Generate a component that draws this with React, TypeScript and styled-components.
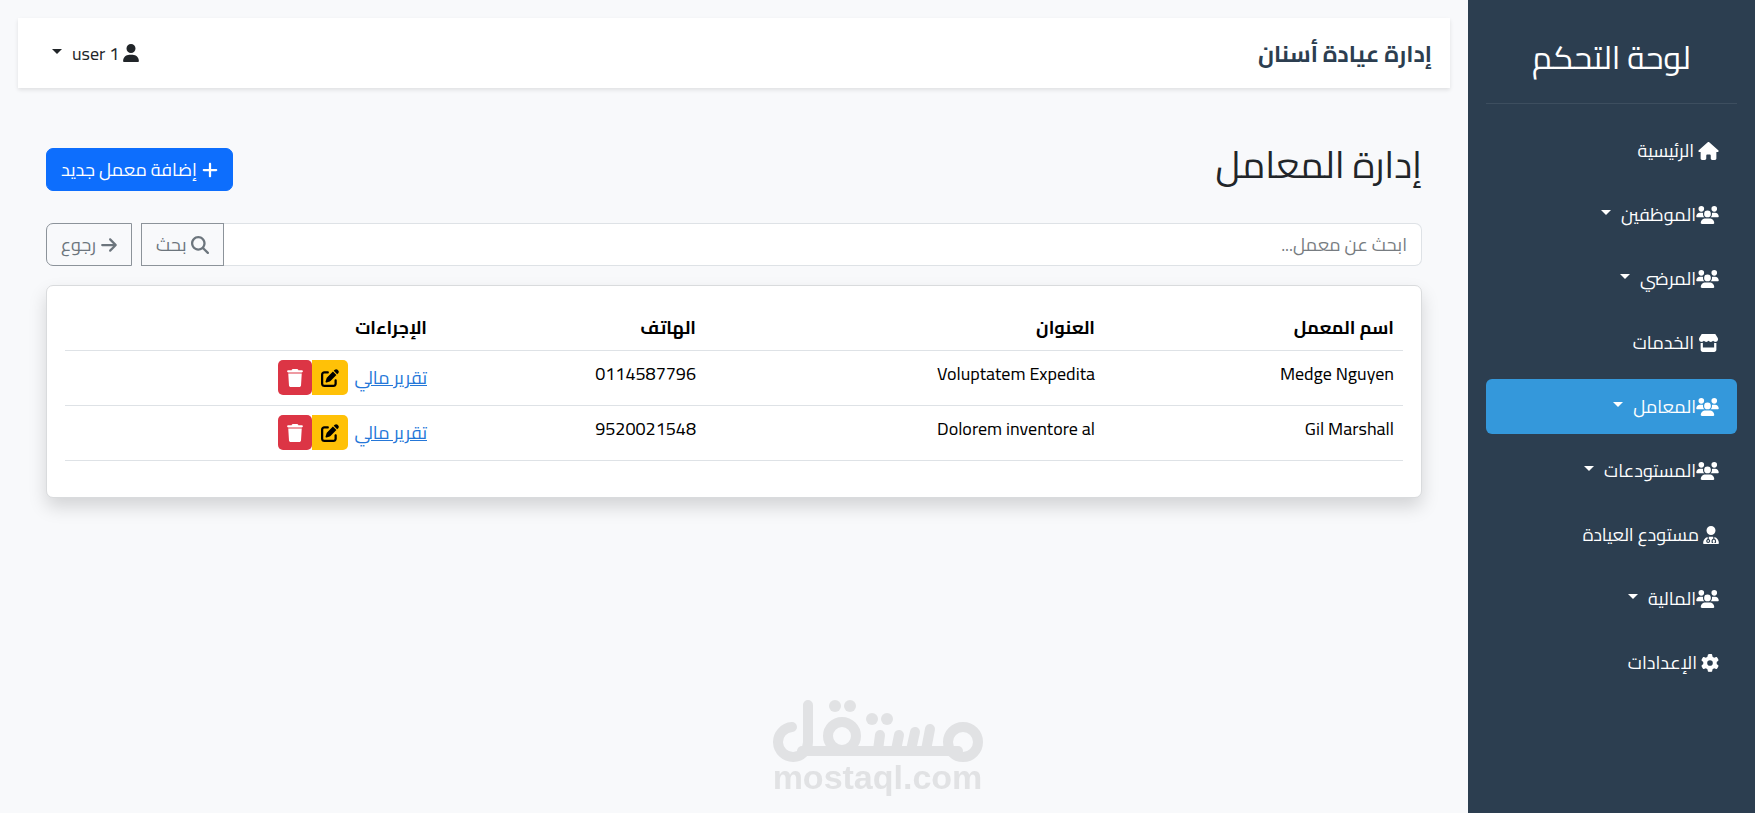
import React from "react";
import styled, { createGlobalStyle, css } from "styled-components";
import {
  FaHouse,
  FaUsers,
  FaStore,
  FaUserDoctor,
  FaGear,
  FaPlus,
  FaMagnifyingGlass,
  FaArrowRight,
  FaUser,
  FaPenToSquare,
  FaTrash,
} from "react-icons/fa6";

const GlobalStyle = createGlobalStyle`
  *, *::before, *::after { box-sizing: border-box; }
  body {
    margin: 0;
    background: #f8f9fb;
    color: #212529;
    font-family: Cairo, Roboto, "DejaVu Sans", sans-serif;
    font-size: 18px;
    line-height: 27px;
  }
  button, input { font: inherit; }
`;

const Glyph = styled.span<{ $width: number }>`
  display: flex;
  flex: none;
  svg {
    width: ${(p) => p.$width}px;
    height: 18px;
  }
`;

const Page = styled.div`
  display: flex;
  min-height: 100vh;
`;

const Sidebar = styled.aside`
  flex: 0 0 287px;
  padding: 18px;
  background: #2c3e50;
  color: #fff;
`;

const Brand = styled.h2`
  margin: 0 0 19px;
  padding: 18px 0 24px;
  border-bottom: 1px solid #3d4e5f;
  font-size: 32px;
  font-weight: 400;
  line-height: 43px;
  text-align: center;
`;

const NavList = styled.ul`
  display: flex;
  flex-direction: column;
  gap: 9px;
  margin: 0;
  padding: 0;
  list-style: none;
`;

const NavLink = styled.a<{ $active?: boolean; $tight?: boolean }>`
  display: flex;
  align-items: center;
  gap: ${(p) => (p.$tight ? 0 : 4)}px;
  padding: 14px 18px;
  border-radius: 6px;
  background: ${(p) => (p.$active ? "#3498db" : "transparent")};
  color: #fff;
  text-decoration: none;
  white-space: nowrap;
`;

const Caret = styled.span`
  width: 0;
  margin-inline-start: 10px;
  margin-bottom: 4px;
  border: 5px solid transparent;
  border-top-color: currentColor;
  border-bottom: 0;
`;

const Main = styled.main`
  flex: 1;
  min-width: 0;
  padding: 18px;
`;

const TopBar = styled.header`
  display: flex;
  align-items: center;
  justify-content: space-between;
  height: 70px;
  padding: 0 18px 0 34px;
  background: #fff;
  box-shadow: 0 2px 4px rgba(0, 0, 0, 0.1);
`;

const SiteName = styled.h1`
  margin: 0;
  color: #2c3e50;
  font-size: 23px;
  font-weight: 700;
`;

const UserMenu = styled.button`
  display: flex;
  align-items: center;
  padding: 0;
  border: 0;
  background: none;
  color: #212529;
`;

const UserName = styled.span`
  margin-inline-start: 4px;
`;

const Content = styled.section`
  padding: 55px 28px 0;
`;

const TitleRow = styled.div`
  display: flex;
  align-items: center;
  justify-content: space-between;
  margin-bottom: 27px;
`;

const PageTitle = styled.h2`
  margin: 0 0 9px;
  font-size: 37px;
  font-weight: 400;
  line-height: 44px;
`;

const buttonBase = css`
  display: flex;
  align-items: center;
  gap: 5px;
  height: 43px;
  padding: 0 14px;
  cursor: pointer;
  white-space: nowrap;
`;

const AddButton = styled.button`
  ${buttonBase}
  border: 1px solid #0d6efd;
  border-radius: 7px;
  background: #0d6efd;
  color: #fff;
`;

const OutlineButton = styled.button<{ $end?: boolean }>`
  ${buttonBase}
  border: 1px solid #8c939a;
  border-radius: ${(p) => (p.$end ? "7px 0 0 7px" : "0")};
  margin-inline-start: ${(p) => (p.$end ? 9 : 0)}px;
  background: transparent;
  color: #6c757d;
`;

const SearchForm = styled.form`
  display: flex;
  margin-bottom: 19px;
`;

const SearchInput = styled.input`
  flex: 1;
  min-width: 0;
  height: 43px;
  padding: 0 14px;
  border: 1px solid #dee2e6;
  border-left: 0;
  border-radius: 0 7px 7px 0;
  background: #fff;
  color: #212529;
  &::placeholder { color: #777c81; opacity: 1; }
`;

const Card = styled.div`
  padding: 18px 18px 36px;
  border: 1px solid #d9dbdd;
  border-radius: 7px;
  background: #fff;
  box-shadow: 0 9px 18px rgba(0, 0, 0, 0.15);
`;

const Table = styled.table`
  width: 100%;
  border-collapse: collapse;
  table-layout: fixed;
  color: #000;
`;

const Col = styled.col<{ $width: number }>`
  width: ${(p) => p.$width}px;
`;

const HeadCell = styled.th`
  padding: 10px 9px 9px;
  border-bottom: 1px solid #dee2e6;
  font-weight: 700;
  text-align: start;
`;

const Cell = styled.td`
  height: 55px;
  padding: 9px;
  border-bottom: 1px solid #dee2e6;
  text-align: start;
  vertical-align: top;
`;

const Actions = styled.div`
  display: flex;
  align-items: center;
`;

const ReportLink = styled.a`
  margin-inline-end: 6px;
  color: #2577d8;
`;

const IconButton = styled.button<{ $danger?: boolean }>`
  display: grid;
  place-items: center;
  width: ${(p) => (p.$danger ? 34 : 36)}px;
  height: 35px;
  padding: 0;
  border: 0;
  border-radius: ${(p) => (p.$danger ? "5px" : "0 5px 5px 0")};
  background: ${(p) => (p.$danger ? "#dc3545" : "#ffc107")};
  color: ${(p) => (p.$danger ? "#fff" : "#000")};
  cursor: pointer;
`;

const Watermark = styled.div`
  position: fixed;
  bottom: 21px;
  left: 50%;
  width: 212px;
  transform: translateX(-50%);
  color: #e1e2e4;
  pointer-events: none;
  direction: ltr;
  font-family: "Liberation Sans", sans-serif;
  font-size: 34px;
  font-weight: 700;
  line-height: 30px;
  text-align: center;
`;

const WatermarkLogo = styled.svg`
  display: block;
  width: 212px;
  height: 62px;
`;

const navItems = [
  { label: "الرئيسية", icon: FaHouse, width: 21 },
  { label: "الموظفين", icon: FaUsers, width: 23, menu: true },
  { label: "المرضي", icon: FaUsers, width: 23, menu: true },
  { label: "الخدمات", icon: FaStore, width: 21 },
  { label: "المعامل", icon: FaUsers, width: 23, menu: true, active: true },
  { label: "المستودعات", icon: FaUsers, width: 23, menu: true },
  { label: "مستودع العيادة", icon: FaUserDoctor, width: 16 },
  { label: "المالية", icon: FaUsers, width: 23, menu: true },
  { label: "الإعدادات", icon: FaGear, width: 18 },
];

const columns = [
  { title: "اسم المعمل", width: 299 },
  { title: "العنوان", width: 399 },
  { title: "الهاتف", width: 269 },
  { title: "الإجراءات", width: 371 },
];

const labs = [
  { name: "Medge Nguyen", address: "Voluptatem Expedita", phone: "0114587796" },
  { name: "Gil Marshall", address: "Dolorem inventore al", phone: "9520021548" },
];

export default function App() {
  return (
    <Page dir="rtl" lang="ar">
      <GlobalStyle />
      <Sidebar>
        <Brand>لوحة التحكم</Brand>
        <nav>
          <NavList>
            {navItems.map(({ label, icon: Icon, width, menu, active }) => (
              <li key={label}>
                <NavLink href="#" $active={active} $tight={menu}>
                  <Glyph $width={width}><Icon /></Glyph>
                  <span>{label}</span>
                  {menu && <Caret />}
                </NavLink>
              </li>
            ))}
          </NavList>
        </nav>
      </Sidebar>

      <Main>
        <TopBar>
          <SiteName>إدارة عيادة أسنان</SiteName>
          <UserMenu type="button">
            <Glyph $width={16}><FaUser /></Glyph>
            <UserName>user 1</UserName>
            <Caret />
          </UserMenu>
        </TopBar>

        <Content>
          <TitleRow>
            <PageTitle>إدارة المعامل</PageTitle>
            <AddButton type="button">
              <Glyph $width={16}><FaPlus /></Glyph>
              إضافة معمل جديد
            </AddButton>
          </TitleRow>

          <SearchForm>
            <SearchInput type="text" aria-label="ابحث عن معمل" placeholder="ابحث عن معمل..." />
            <OutlineButton type="button">
              <Glyph $width={18}><FaMagnifyingGlass /></Glyph>
              بحث
            </OutlineButton>
            <OutlineButton type="button" $end>
              <Glyph $width={16}><FaArrowRight /></Glyph>
              رجوع
            </OutlineButton>
          </SearchForm>

          <Card>
            <Table>
              <colgroup>
                {columns.map((column) => (
                  <Col key={column.title} $width={column.width} />
                ))}
              </colgroup>
              <thead>
                <tr>
                  {columns.map((column) => (
                    <HeadCell key={column.title} scope="col">{column.title}</HeadCell>
                  ))}
                </tr>
              </thead>
              <tbody>
                {labs.map((lab) => (
                  <tr key={lab.name}>
                    <Cell>{lab.name}</Cell>
                    <Cell>{lab.address}</Cell>
                    <Cell>{lab.phone}</Cell>
                    <Cell>
                      <Actions>
                        <ReportLink href="#">تقرير مالي</ReportLink>
                        <IconButton type="button" aria-label="تعديل">
                          <Glyph $width={18}><FaPenToSquare /></Glyph>
                        </IconButton>
                        <IconButton type="button" aria-label="حذف" $danger>
                          <Glyph $width={16}><FaTrash /></Glyph>
                        </IconButton>
                      </Actions>
                    </Cell>
                  </tr>
                ))}
              </tbody>
            </Table>
          </Card>
        </Content>
      </Main>

      <Watermark>
        <WatermarkLogo viewBox="0 0 212 62" fill="none" stroke="currentColor" strokeWidth="10" strokeLinecap="round" aria-hidden="true">
          <path d="M20 27A15 15 0 1 0 36 42V5" />
          <path d="M30 51H186" />
          <circle cx="70" cy="36" r="14" />
          <circle cx="191" cy="42" r="15" />
          <path d="M106 50L108 35M124 50L127 35M139 50L143 32M154 50L158 29" />
          <g fill="currentColor" stroke="none">
            <circle cx="63" cy="6" r="6" />
            <circle cx="78" cy="6" r="6" />
            <circle cx="100" cy="19" r="6" />
            <circle cx="115" cy="19" r="6" />
          </g>
        </WatermarkLogo>
        mostaql.com
      </Watermark>
    </Page>
  );
}
